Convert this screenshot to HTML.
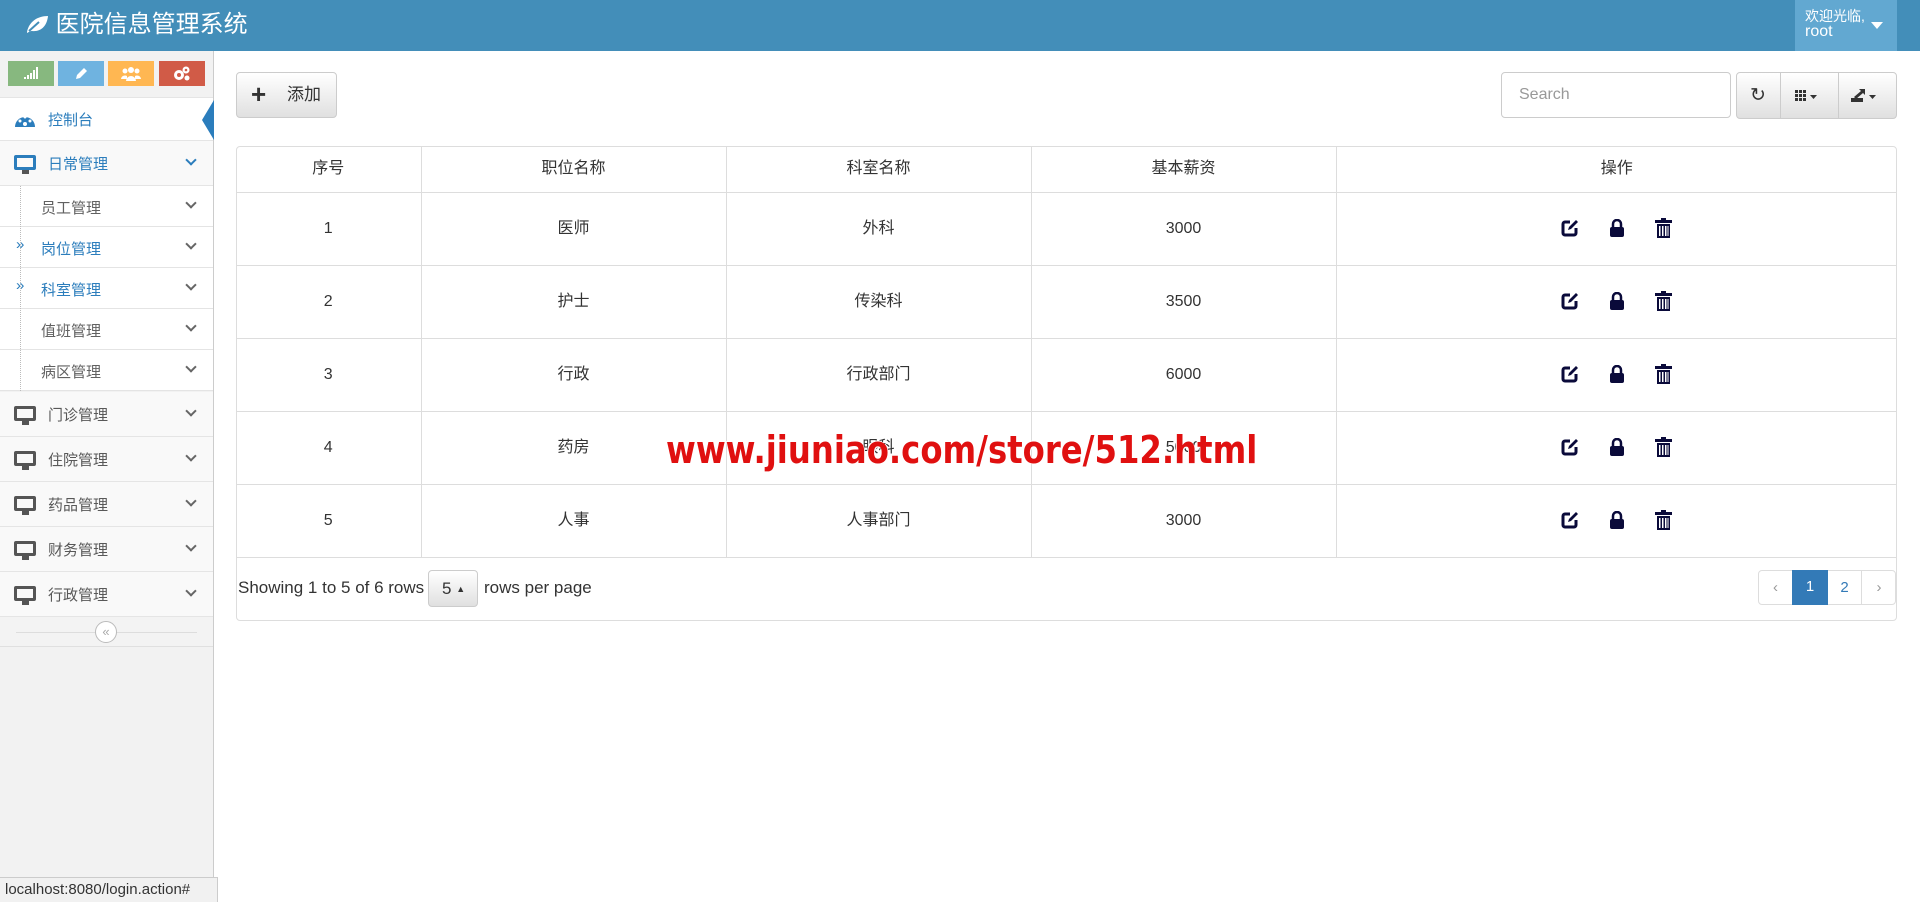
<!DOCTYPE html>
<html><head><meta charset="utf-8"><style>
*{box-sizing:border-box;margin:0;padding:0}
body{width:1920px;height:902px;overflow:hidden;font-family:"Liberation Sans","Noto Sans CJK SC",sans-serif;background:#fff;position:relative;color:#333}
.hdr{position:absolute;left:0;top:0;width:1920px;height:51px;background:#438eb9}
.hdr .t{position:absolute;left:25px;top:10px;color:#fff;font-size:24px;line-height:30px}
.user{position:absolute;left:1795px;top:0;width:102px;height:51px;background:#62a8d1;color:#fff;font-size:14px;line-height:15px;padding:9px 0 0 10px}
.user:after{content:"";position:absolute;right:14px;top:22px;border:6px solid transparent;border-top:7px solid #fff}
.side{position:absolute;left:0;top:51px;width:214px;height:851px;background:#f2f2f2;border-right:1px solid #ccc}
.sb{position:absolute;top:10px;height:25px;width:46px}
.mi{position:absolute;left:0;width:213px;border-bottom:1px solid #e5e5e5;background:#f9f9f9;font-size:15px;color:#585858}
.mi .ic{position:absolute;left:14px;width:22px;height:15px;border:3px solid #555;border-radius:2px}
.mi .ic:after{content:"";position:absolute;left:5px;top:12px;width:7px;height:4px;background:#555}
.chev{position:absolute;right:18px;width:8px;height:8px;border-right:2px solid #666;border-bottom:2px solid #666;transform:rotate(45deg)}
.sub{position:absolute;left:0;width:213px;height:41px;background:#fff;border-bottom:1px solid #e4e4e4;font-size:15px;color:#616161}
.btn{position:absolute;border:1px solid #ccc;border-radius:4px;background:linear-gradient(#fff,#e0e0e0)}
table{position:absolute;left:236px;top:146px;width:1661px;border-collapse:collapse;font-size:16px;color:#333}
td,th{text-align:center;vertical-align:middle;line-height:20px;border-bottom:1px solid #ddd;border-left:1px solid #ddd;font-weight:normal}
th{height:46px}td{height:73px}
.wrap{position:absolute;left:236px;top:146px;width:1661px;height:475px;border:1px solid #ddd;border-radius:4px}
.ico{display:inline-block;vertical-align:middle;margin:0 15px}
</style></head><body>
<div class="hdr"><div class="t"><svg width="24" height="20" viewBox="0 0 24 20" style="vertical-align:-2px"><path d="M2 18C4 8 12 2 23 2 22 12 16 18 7 17 5 17 4 18 2 19Z" fill="#fff"/><path d="M4 17L14 8" stroke="#438eb9" stroke-width="2"/></svg> 医院信息管理系统</div>
<div class="user">欢迎光临,<br><span style="font-size:16px">root</span></div></div>
<div class="side">
<div class="sb" style="left:8px;background:#87b87f"><svg style="position:absolute;left:16px;top:6px" width="14" height="12"><g fill="#fff"><rect x="0" y="10" width="2" height="2"/><rect x="3" y="8" width="2" height="4"/><rect x="6" y="6" width="2" height="6"/><rect x="9" y="3" width="2" height="9"/><rect x="12" y="0" width="2" height="12"/></g></svg></div>
<div class="sb" style="left:58px;background:#6fb3e0"><svg style="position:absolute;left:16px;top:6px" width="14" height="14"><path d="M2 12l1-4 7-7 3 3-7 7z" fill="#fff"/></svg></div>
<div class="sb" style="left:108px;background:#ffb752"><svg style="position:absolute;left:13px;top:5px" width="20" height="15"><g fill="#fff"><circle cx="10" cy="4" r="3"/><circle cx="4" cy="5" r="2.5"/><circle cx="16" cy="5" r="2.5"/><path d="M5 15a5 5 0 0 1 10 0z"/><path d="M0 13a4 4 0 0 1 6-3v3z"/><path d="M20 13a4 4 0 0 0-6-3v3z"/></g></svg></div>
<div class="sb" style="left:159px;background:#d15b47"><svg style="position:absolute;left:14px;top:5px" width="18" height="15"><g fill="#fff"><circle cx="6" cy="9" r="5"/><circle cx="13" cy="4" r="3.5"/><circle cx="14" cy="12" r="2.5"/></g><g fill="#d15b47"><circle cx="6" cy="9" r="2"/><circle cx="13" cy="4" r="1.3"/></g></svg></div>
<div class="mi" style="top:46px;height:44px;background:#fff;color:#2b7dbc;border-top:1px solid #e5e5e5"><svg style="position:absolute;left:14px;top:13px" width="22" height="17" viewBox="0 0 22 17"><path d="M1 16A10 10 0 0 1 21 16Z" fill="#2b7dbc"/><circle cx="11" cy="13" r="2" fill="#fff"/><circle cx="6" cy="10" r="1.5" fill="#fff"/><circle cx="16" cy="10" r="1.5" fill="#fff"/><circle cx="11" cy="6" r="1.5" fill="#fff"/></svg><span style="position:absolute;left:48px;top:11px">控制台</span>
<div style="position:absolute;right:-1px;top:2px;border:20px solid transparent;border-right:12px solid #2b7dbc;border-left:0"></div></div>
<div class="mi" style="top:90px;height:45px;color:#2b7dbc"><div class="ic" style="top:14px;border-color:#2b7dbc"></div><span style="position:absolute;left:48px;top:12px">日常管理</span><div class="chev" style="top:15px;border-color:#2b7dbc"></div></div>
<div class="sub" style="top:135px"><span style="position:absolute;left:41px;top:11px">员工管理</span><div class="chev" style="top:13px"></div></div>
<div class="sub" style="top:176px;color:#2b7dbc"><span style="position:absolute;left:16px;top:9px">»</span><span style="position:absolute;left:41px;top:11px">岗位管理</span><div class="chev" style="top:13px"></div></div>
<div class="sub" style="top:217px;color:#2b7dbc"><span style="position:absolute;left:16px;top:9px">»</span><span style="position:absolute;left:41px;top:11px">科室管理</span><div class="chev" style="top:13px"></div></div>
<div class="sub" style="top:258px"><span style="position:absolute;left:41px;top:11px">值班管理</span><div class="chev" style="top:13px"></div></div>
<div class="sub" style="top:299px"><span style="position:absolute;left:41px;top:11px">病区管理</span><div class="chev" style="top:13px"></div></div>
<div style="position:absolute;left:20px;top:135px;height:205px;border-left:1px dotted #bbb"></div>
<div class="mi" style="top:341px;height:45px"><div class="ic" style="top:14px"></div><span style="position:absolute;left:48px;top:12px">门诊管理</span><div class="chev" style="top:15px"></div></div>
<div class="mi" style="top:386px;height:45px"><div class="ic" style="top:14px"></div><span style="position:absolute;left:48px;top:12px">住院管理</span><div class="chev" style="top:15px"></div></div>
<div class="mi" style="top:431px;height:45px"><div class="ic" style="top:14px"></div><span style="position:absolute;left:48px;top:12px">药品管理</span><div class="chev" style="top:15px"></div></div>
<div class="mi" style="top:476px;height:45px"><div class="ic" style="top:14px"></div><span style="position:absolute;left:48px;top:12px">财务管理</span><div class="chev" style="top:15px"></div></div>
<div class="mi" style="top:521px;height:45px"><div class="ic" style="top:14px"></div><span style="position:absolute;left:48px;top:12px">行政管理</span><div class="chev" style="top:15px"></div></div>
<div style="position:absolute;left:0;top:566px;width:213px;height:30px;background:#f3f3f3;border-bottom:1px solid #e0e0e0"><div style="position:absolute;left:16px;right:16px;top:15px;border-top:1px solid #ddd"></div><div style="position:absolute;left:95px;top:4px;width:22px;height:22px;border:1px solid #bbb;border-radius:50%;background:#fff;color:#aaa;font-size:13px;text-align:center;line-height:19px">«</div></div>
</div>
<div class="btn" style="left:236px;top:72px;width:101px;height:46px;font-size:17px;line-height:44px;color:#333"><b style="position:absolute;left:14px;top:-1px;font-size:26px">+</b><span style="position:absolute;left:50px">添加</span></div>
<div style="position:absolute;left:1501px;top:72px;width:230px;height:46px;border:1px solid #ccc;border-radius:4px;color:#999;font-size:16px;line-height:44px;padding-left:17px">Search</div>
<div class="btn" style="left:1736px;top:72px;width:161px;height:47px"><div style="position:absolute;left:43px;top:0;height:45px;border-left:1px solid #ccc"></div><div style="position:absolute;left:101px;top:0;height:45px;border-left:1px solid #ccc"></div>
<span style="position:absolute;left:13px;top:11px;font-size:19px;color:#333">↻</span>
<svg style="position:absolute;left:58px;top:17px" width="28" height="12"><g fill="#333"><rect x="0" y="0" width="3" height="3"/><rect x="4" y="0" width="3" height="3"/><rect x="8" y="0" width="3" height="3"/><rect x="0" y="4" width="3" height="3"/><rect x="4" y="4" width="3" height="3"/><rect x="8" y="4" width="3" height="3"/><rect x="0" y="8" width="3" height="3"/><rect x="4" y="8" width="3" height="3"/><rect x="8" y="8" width="3" height="3"/><path d="M15 5h7l-3.5 4z"/></g></svg>
<svg style="position:absolute;left:114px;top:15px" width="32" height="16"><g fill="#333"><path d="M0 10h12v4H0z"/><path d="M3 9l7-6-2-2h6v6l-2-2-7 6z"/><path d="M18 7h7l-3.5 4z"/></g></svg></div>
<div class="wrap"></div>
<table><tr><th style="border-left:0;width:185px">序号</th><th style="width:305px">职位名称</th><th style="width:305px">科室名称</th><th style="width:305px">基本薪资</th><th>操作</th></tr>
<tr><td style="border-left:0">1</td><td>医师</td><td>外科</td><td>3000</td><td class="ops"></td></tr>
<tr><td style="border-left:0">2</td><td>护士</td><td>传染科</td><td>3500</td><td class="ops"></td></tr>
<tr><td style="border-left:0">3</td><td>行政</td><td>行政部门</td><td>6000</td><td class="ops"></td></tr>
<tr><td style="border-left:0">4</td><td>药房</td><td>眼科</td><td>5000</td><td class="ops"></td></tr>
<tr><td style="border-left:0">5</td><td>人事</td><td>人事部门</td><td>3000</td><td class="ops"></td></tr></table>
<script>
var s='<svg class="ico" width="18" height="18" viewBox="0 0 18 18"><path d="M9 3H4a2 2 0 0 0-2 2v9a2 2 0 0 0 2 2h9a2 2 0 0 0 2-2V9" fill="none" stroke="#0a0a3a" stroke-width="3"/><path d="M7 11l1-3 7-7 2 2-7 7z" fill="#0a0a3a"/></svg><svg class="ico" width="16" height="18" viewBox="0 0 16 18"><path d="M4 8V5a4 4 0 0 1 8 0v3" fill="none" stroke="#0a0a3a" stroke-width="2.5"/><rect x="1" y="8" width="14" height="10" rx="2" fill="#0a0a3a"/></svg><svg class="ico" width="17" height="20" viewBox="0 0 17 20"><g fill="#0a0a3a"><rect x="6" y="0" width="5" height="2"/><rect x="0" y="2" width="17" height="3"/><path d="M2 6h13v14H2z"/></g><g fill="#fff"><rect x="4" y="8" width="1.5" height="10"/><rect x="7" y="8" width="1.5" height="10"/><rect x="10" y="8" width="1.5" height="10"/><rect x="12.5" y="8" width="1" height="10"/></g></svg>';
document.querySelectorAll('.ops').forEach(function(e){e.innerHTML=s});
</script>
<div style="position:absolute;left:238px;top:578px;font-size:17px;color:#333">Showing 1 to 5 of 6 rows</div>
<div class="btn" style="left:428px;top:570px;width:50px;height:37px;font-size:17px;line-height:35px;padding-left:13px">5 <span style="font-size:9px;vertical-align:2px">▲</span></div>
<div style="position:absolute;left:484px;top:578px;font-size:17px;color:#333">rows per page</div>
<div style="position:absolute;left:1758px;top:570px;width:138px;height:35px;border:1px solid #ddd;border-radius:4px;font-size:15px;line-height:33px">
<span style="position:absolute;left:0;width:33px;text-align:center;color:#999">‹</span>
<span style="position:absolute;left:33px;top:-1px;width:36px;height:35px;background:#337ab7;color:#fff;text-align:center">1</span>
<span style="position:absolute;left:69px;width:34px;text-align:center;color:#337ab7;border-right:1px solid #ddd">2</span>
<span style="position:absolute;left:103px;width:34px;text-align:center;color:#999">›</span></div>
<div style="position:absolute;left:666px;top:428px;font-family:'DejaVu Sans','Liberation Sans',sans-serif;font-weight:bold;font-size:38px;letter-spacing:0px;color:#e01010;text-shadow:1px 1px 0 #fff,-1px -1px 0 #fff;white-space:nowrap;transform:scaleX(0.85);transform-origin:0 0">www.jiuniao.com/store/512.html</div>
<div style="position:absolute;left:0;top:877px;width:218px;height:25px;background:#f1f1f1;border:1px solid #ccc;border-left:0;border-bottom:0;font-size:15px;line-height:23px;padding-left:5px;color:#333">localhost:8080/login.action#</div>
</body></html>
